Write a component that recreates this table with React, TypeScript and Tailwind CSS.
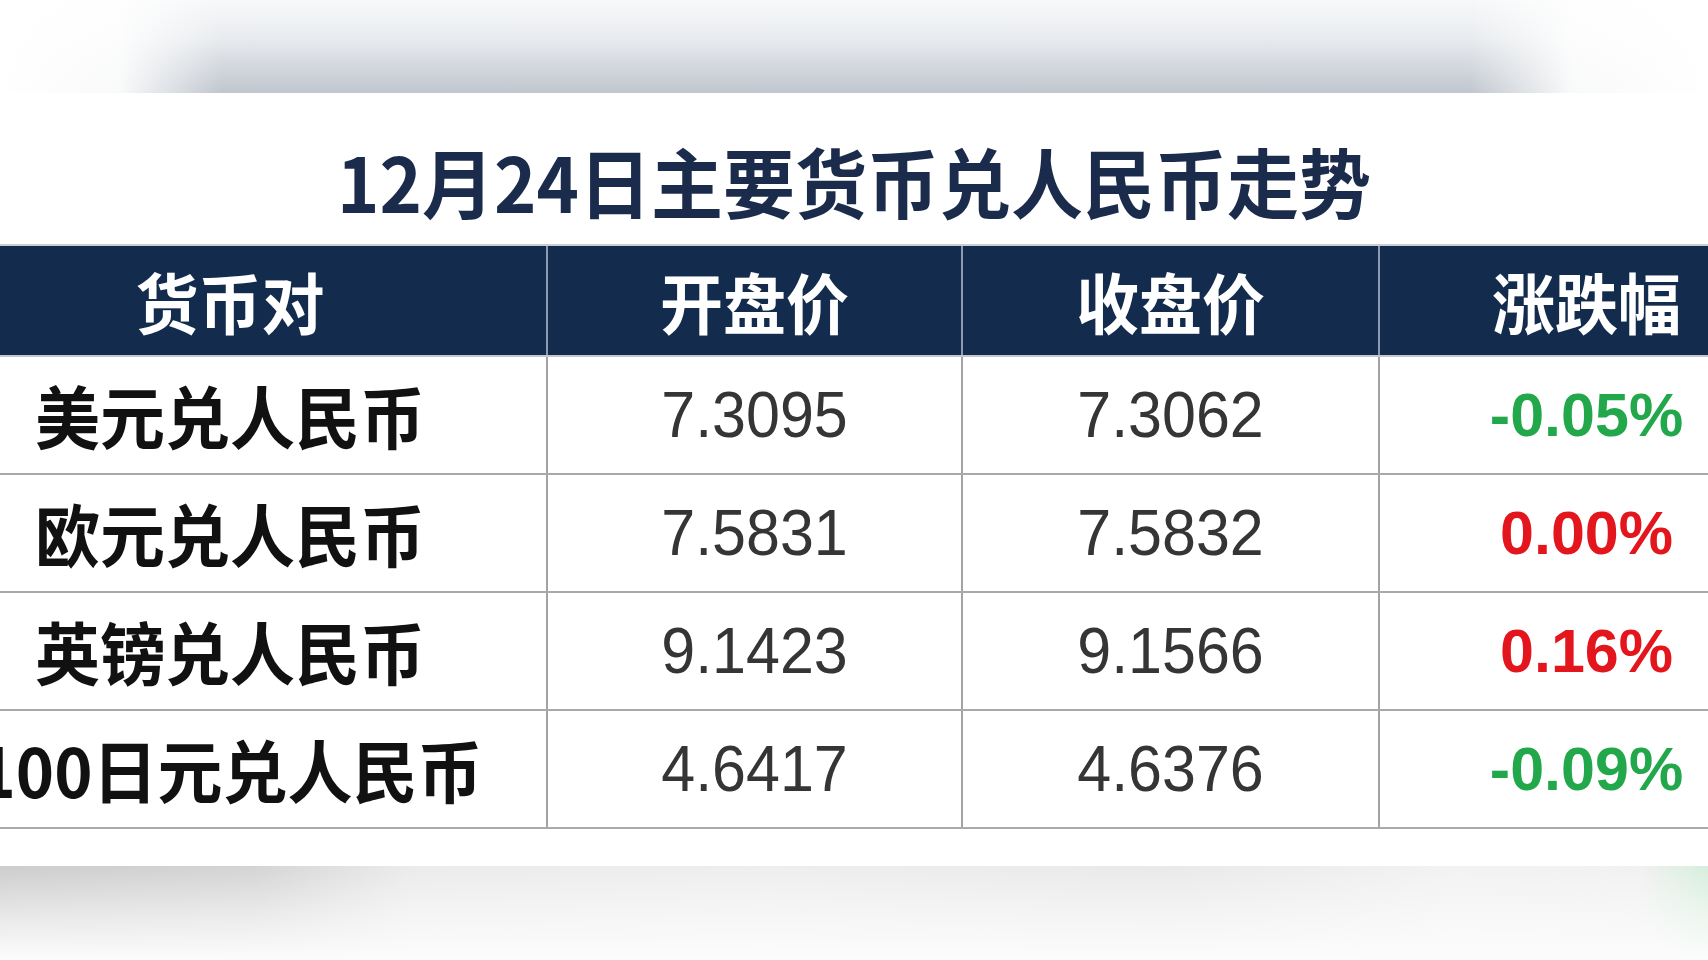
import React from "react";

const rows = [
  { name: "美元兑人民币", open: "7.3095", close: "7.3062", chg: "-0.05%", up: false },
  { name: "欧元兑人民币", open: "7.5831", close: "7.5832", chg: "0.00%", up: true },
  { name: "英镑兑人民币", open: "9.1423", close: "9.1566", chg: "0.16%", up: true },
  { name: "100日元兑人民币", open: "4.6417", close: "4.6376", chg: "-0.09%", up: false },
];

const cjk = { fontFamily: '"Noto Sans CJK SC", "Noto Sans", sans-serif' };
const lat = { fontFamily: '"Liberation Sans", Arial, sans-serif' };

export default function App() {
  return (
    <div className="w-[1708px] h-[960px] overflow-hidden bg-white flex flex-col">
      <div className="h-[93px] shrink-0 bg-[linear-gradient(to_right,#ffffff_0%,rgba(255,255,255,0.9)_7%,rgba(255,255,255,0)_13%,rgba(255,255,255,0)_86%,rgba(255,255,255,0.9)_92%,#ffffff_100%),linear-gradient(to_bottom,#f7f8f9_0%,#e9ecef_40%,#c0c6ce_100%)]" />
      <div className="flex-1 flex flex-col bg-white">
        <div className="pt-[46px] h-[151px] flex justify-center">
          <div
            className="text-[72px] leading-[84px] font-bold text-[#1b2b4b] scale-y-105"
            style={cjk}
          >
            12月24日主要货币兑人民币走势
          </div>
        </div>
        <div className="ml-[-86px] w-[1879px] flex flex-col">
          <div className="flex h-[113px] bg-[#132c4d] border-t-2 border-[#c9ccd1] border-b-2 border-b-[#c4c8cd]">
            {["货币对", "开盘价", "收盘价", "涨跌幅"].map((h, i) => (
              <div
                key={h}
                className={`${i === 0 ? "w-[632px]" : i === 2 ? "w-[417px] border-l-2 border-[#8c9bb1]" : "w-[415px] border-l-2 border-[#8c9bb1]"} flex items-center justify-center text-white font-bold text-[63px] leading-none`}
                style={cjk}
              >
                <span className="scale-y-105">{h}</span>
              </div>
            ))}
          </div>
          {rows.map((r) => (
            <div key={r.name} className="flex h-[118px] border-b-2 border-[#a9a9a9]">
              <div className="w-[632px] flex items-center justify-center">
                <span className="text-[65px] font-bold text-[#111111] leading-none scale-y-105" style={cjk}>
                  {r.name}
                </span>
              </div>
              <div className="w-[415px] border-l-2 border-[#a3a3a3] flex items-center justify-center">
                <span className="text-[61px] text-[#353535] leading-none scale-y-105" style={lat}>
                  {r.open}
                </span>
              </div>
              <div className="w-[417px] border-l-2 border-[#a3a3a3] flex items-center justify-center">
                <span className="text-[61px] text-[#353535] leading-none scale-y-105" style={lat}>
                  {r.close}
                </span>
              </div>
              <div className="w-[415px] border-l-2 border-[#a3a3a3] flex items-center justify-center">
                <span
                  className={`text-[61px] font-bold leading-none ${r.up ? "text-[#e3151d]" : "text-[#22a74b]"}`}
                  style={lat}
                >
                  {r.chg}
                </span>
              </div>
            </div>
          ))}
        </div>
      </div>
      <div className="h-[94px] shrink-0 bg-[linear-gradient(to_bottom,rgba(255,255,255,0)_0%,rgba(252,252,252,0.6)_55%,#fcfcfc_100%),linear-gradient(to_right,#cdcdcd_0%,#d4d4d4_15%,#ebebeb_24%,#eeeeee_45%,#e9e9e9_68%,#f2f2f2_85%,#f1f1f1_96%,#d6eedc_100%)]" />
    </div>
  );
}
